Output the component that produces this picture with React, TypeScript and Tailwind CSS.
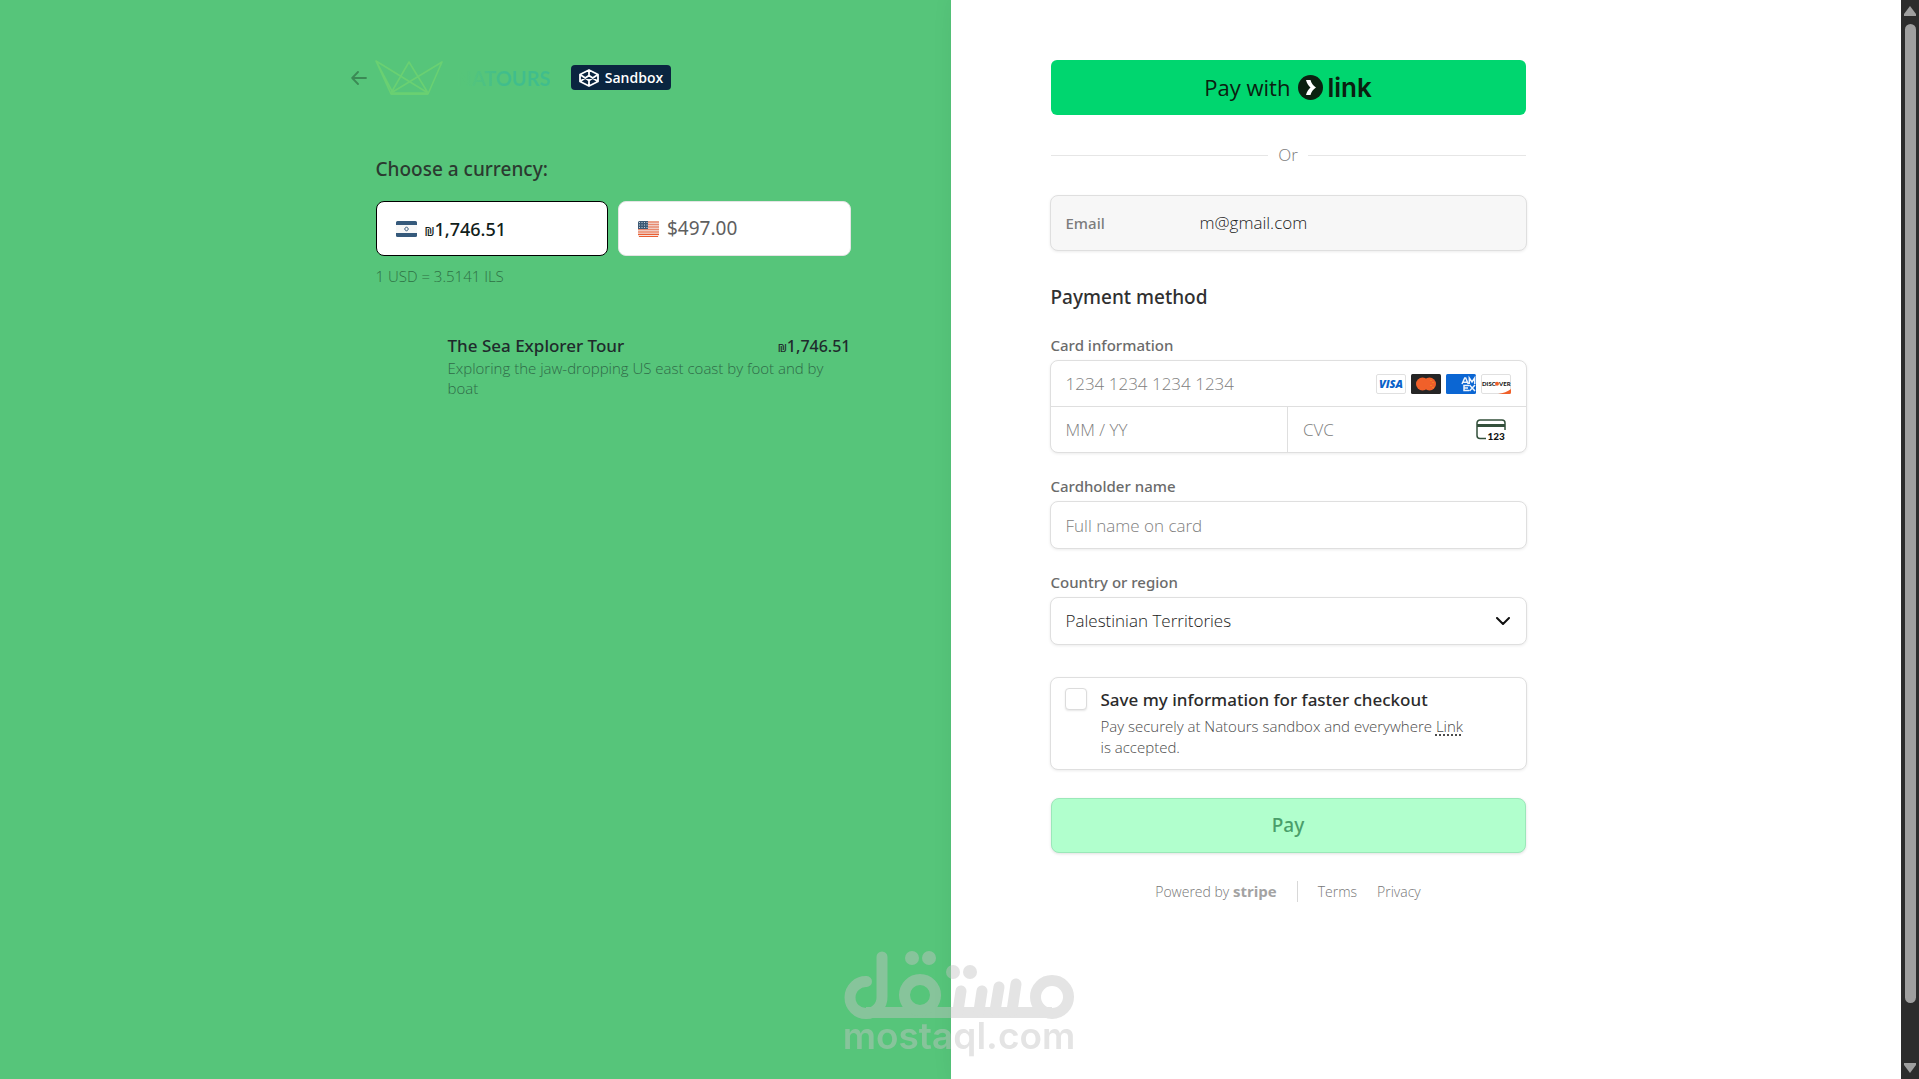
import React from "react";

const field =
  "rounded-lg border border-[#dfdfdf] bg-white shadow-[0_1px_3px_rgba(0,0,0,0.08)]";
const label = "block font-['Noto_Sans',sans-serif] text-[15px] leading-5 font-medium text-[#6b6b6b]";
const heading = "font-['Noto_Sans',sans-serif] text-[19px] leading-7 font-medium";
const fieldText = "text-[17px] font-light placeholder:text-[#808080] outline-none";

function Shekel({ className }: { className: string }) {
  return <span className={className}>₪</span>;
}

function IsraelFlag() {
  return (
    <svg viewBox="0 0 21 16" className="h-4 w-[21px]" aria-hidden="true">
      <rect width="21" height="16" rx="1.5" fill="#f7f7f7" />
      <path d="M1.5 0h18A1.5 1.5 0 0 1 21 1.5V4H0V1.5A1.5 1.5 0 0 1 1.5 0z" fill="#35597b" />
      <path d="M0 12h21v2.500A1.500 1.500 0 0 1 19.500 16h-18A1.500 1.500 0 0 1 0 14.500z" fill="#35597b" />
      <path d="M10.500 5.800 12.500 8l-2 2.200L8.500 8z" fill="none" stroke="#35597b" />
    </svg>
  );
}

function UsFlag() {
  return (
    <svg viewBox="0 0 21 16" className="h-4 w-[21px]" aria-hidden="true">
      <rect width="21" height="16" rx="1.500" fill="#f3e3df" />
      <path d="M10 1h11M10 3.500h11M10 6h11M0 8.500h21" stroke="#e8896f" strokeWidth="1.400" />
      <path d="M0 11h21M0 13.400h21M1 15.500h19" stroke="#ea5f33" strokeWidth="1.200" />
      <path d="M1.500 0H10v8H0V1.500A1.500 1.500 0 0 1 1.500 0z" fill="#3c5a76" />
      <path d="M1 1.500h9M1 4h9M1 6.500h9" stroke="#c9d2da" strokeDasharray="1 1.500" />
    </svg>
  );
}

function Crown() {
  return (
    <svg viewBox="0 0 68 36" className="h-9 w-17" fill="none" stroke="#6ad072" strokeWidth="1.500" strokeLinejoin="round" aria-hidden="true">
      <path d="M1 1 16 34H53L67 2 16 33 34 2 53 33 1 1 18 33" strokeWidth="1.600" />
      <path d="M16 33.500H53" strokeWidth="2.400" />
    </svg>
  );
}

function CardBrands() {
  return (
    <div className="flex gap-[5px]" aria-label="Accepted cards">
      <svg viewBox="0 0 30 20" className="h-5 w-[30px]">
        <rect x=".5" y=".5" width="29" height="19" rx="1.500" fill="#fff" stroke="#e0e0e0" />
        <text x="15" y="14" textAnchor="middle" fontFamily="Open Sans, sans-serif" fontWeight="800" fontStyle="italic" fontSize="11" fill="#0a62c9">VISA</text>
      </svg>
      <svg viewBox="0 0 30 20" className="h-5 w-[30px]">
        <rect width="30" height="20" rx="1.500" fill="#252525" />
        <circle cx="11.500" cy="10" r="6.500" fill="#f0602a" />
        <circle cx="18.500" cy="10" r="6.500" fill="#f0602a" />
        <path d="M20 6v1M22 8v1M20 11v1M22 13v1" stroke="#f79e1b" />
      </svg>
      <svg viewBox="0 0 30 20" className="h-5 w-[30px]">
        <rect width="30" height="20" rx="1.500" fill="#0b66d3" />
        <g fill="none" stroke="#eef4fc" strokeWidth="1.500">
          <path d="m16 10 2.700-6h1l2.500 6M17 8.300h4M23.300 10V4l2.700 4 2.700-4v6" />
          <path d="M23 11.500h-5v5h5M18 14h4M23.500 11l5.500 6M29 11l-5.500 6" />
        </g>
      </svg>
      <svg viewBox="0 0 30 20" className="h-5 w-[30px]">
        <rect x=".5" y=".5" width="29" height="19" rx="1.500" fill="#fff" stroke="#e0e0e0" />
        <text x="1" y="12" fontFamily="Lato, sans-serif" fontWeight="900" fontSize="6" fill="#222">DISC</text>
        <circle cx="16" cy="9.700" r="2" fill="#f0602a" />
        <text x="18" y="12" fontFamily="Lato, sans-serif" fontWeight="900" fontSize="6" fill="#222">VER</text>
        <path d="M17 20q8-1 13-5v3.500a1.500 1.500 0 0 1-1.500 1.500z" fill="#f0602a" />
      </svg>
    </div>
  );
}

function CvcIcon() {
  return (
    <svg viewBox="0 0 30 22" className="h-[22px] w-[30px]" aria-hidden="true">
      <path d="M10 19.500H4A3 3 0 0 1 1 16.500V4A3 3 0 0 1 4 1H26A3 3 0 0 1 29 4v7" fill="none" stroke="#33503b" strokeWidth="1.500" />
      <path d="M1 6.500h28" stroke="#33503b" strokeWidth="3" />
      <text x="11.500" y="20.500" fontFamily="Lato, sans-serif" fontWeight="900" fontSize="10" fill="#111">123</text>
    </svg>
  );
}

function Watermark() {
  return (
    <svg
      viewBox="0 0 232 110"
      className="pointer-events-none fixed bottom-[18px] left-1/2 h-[110px] w-[232px] -translate-x-1/2 overflow-visible opacity-45"
      aria-hidden="true"
    >
      <g fill="none" stroke="#c3c3c3" strokeWidth="11" strokeLinecap="round">
        <path d="M22.500 30.500A16 16 0 1 0 38 46V6" />
        <path d="M22 61.500H208" strokeLinecap="butt" />
        <circle cx="76" cy="44" r="15.500" />
        <circle cx="208" cy="46" r="16.500" />
        <path d="M117 40 114 60M138 40 135 60M155 36 151 60M172 33 168 60" />
      </g>
      <g fill="#c3c3c3">
        <circle cx="68" cy="7" r="7" />
        <circle cx="85" cy="7" r="7" />
        <circle cx="109" cy="21" r="7" />
        <circle cx="126" cy="21" r="7" />
        <text x="115" y="98" textAnchor="middle" fontFamily="Inter, sans-serif" fontWeight="600" fontSize="37">mostaql.com</text>
      </g>
    </svg>
  );
}

function Scrollbar() {
  return (
    <div className="flex w-[18px] shrink-0 flex-col items-center bg-[#2c2c2c] py-1.5" aria-hidden="true">
      <svg viewBox="0 0 14 10" className="h-2.5 w-3.5"><path d="M7 0 13 8V10H1V8z" fill="#9f9f9f" /></svg>
      <div className="mt-2 mb-15 w-[11px] flex-1 rounded-full bg-[#9f9f9f]" />
      <svg viewBox="0 0 14 10" className="h-2.5 w-3.5"><path d="M7 10 13 2V0H1V2z" fill="#9f9f9f" /></svg>
    </div>
  );
}

function Summary() {
  return (
    <section className="flex justify-end bg-[#56c57a] pr-[100px] pl-8 pt-[60px]">
      <div className="w-full max-w-[475px]">
        <header className="-ml-[25px] flex h-[35px] items-center">
          <a href="#back" aria-label="Back" className="mr-2 text-[#3b8a55]">
            <svg viewBox="0 0 16 14" className="h-3.5 w-4" fill="none" stroke="currentColor" strokeWidth="1.800" strokeLinecap="round" strokeLinejoin="round">
              <path d="M15 7H1.500M7 1 1.200 7 7 13" />
            </svg>
          </a>
          <Crown />
          <span className="ml-3.5 bg-linear-to-r from-[#56c57a] from-10% to-[#40bd8c] to-50% bg-clip-text font-[Lato] text-xl font-bold text-transparent">
            NATOURS
          </span>
          <span className="ml-5 flex h-[25px] items-center gap-1.5 rounded bg-[#0a2540] px-2 text-sm font-semibold text-white">
            <svg viewBox="0 0 20 18" className="h-[18px] w-5" fill="none" stroke="#fff" strokeWidth="1.800" strokeLinejoin="round" aria-hidden="true">
              <path d="M10 1 19 5.500v7L10 17 1 12.500v-7zM10 1v5M10 12v5M1 5.500l9 6 9-6M1 12.500l9-6 9 6" />
            </svg>
            Sandbox
          </span>
        </header>

        <h2 className={heading + " mt-15 text-[#2b3a30]"}>Choose a currency:</h2>
        <div className="mt-4.5 grid grid-cols-2 gap-2.5">
          <button type="button" className="flex h-[55px] items-center gap-2 rounded-lg border border-black bg-white pl-[19px] font-['Noto_Sans'] text-lg font-medium text-[#10201a]">
            <IsraelFlag />
            <span><Shekel className="text-xs" />1,746.51</span>
          </button>
          <button type="button" className="flex h-[55px] items-center gap-2 rounded-lg border border-[#e4e4e4] bg-white pl-[19px] font-['Noto_Sans'] text-[19px] text-[#5f5f5f]">
            <UsFlag />
            $497.00
          </button>
        </div>
        <p className="mt-2.5 text-[15px] leading-5 font-light text-[#2e7044]">1 USD = 3.5141 ILS</p>

        <div className="mt-[50px] pl-[72px]">
          <div className="flex justify-between font-['Noto_Sans'] font-medium text-[#1f2a2c]">
            <h3 className="text-[17px] leading-5">The Sea Explorer Tour</h3>
            <span className="text-base leading-5"><Shekel className="text-[11px]" />1,746.51</span>
          </div>
          <p className="max-w-[390px] text-[15px] leading-5 font-light text-[#2f6a48]">
            Exploring the jaw-dropping US east coast by foot and by boat
          </p>
        </div>
      </div>
    </section>
  );
}

function Payment() {
  return (
    <section className="bg-white pr-8 pl-[100px] pt-[60px] shadow-[15px_0_30px_rgba(0,0,0,0.18)]">
      <form className="w-full max-w-[475px]">
        <button type="button" className="flex h-[55px] w-full items-center justify-center gap-2 rounded-md bg-[#00d66f] text-[22px] text-[#0b2010]">
          Pay with
          <span className="flex items-center gap-1">
            <svg viewBox="0 0 25 25" className="size-[25px]" aria-hidden="true">
              <circle cx="12.500" cy="12.500" r="12.500" fill="#0b2010" />
              <path d="M8 5h4.500c.8 3 2.700 5.700 5.500 7.500-2.800 1.800-4.700 4.500-5.500 7.500H8c.8-3.200 2.400-5.800 4.500-7.500C10.400 10.800 8.800 8.200 8 5z" fill="#fff" />
            </svg>
            <span className="font-[Inter] text-[26px] font-semibold">link</span>
          </span>
        </button>

        <div className="my-7 flex h-6 items-center gap-2.5 text-[17px] font-light text-[#7c7c7c]">
          <span className="h-px flex-1 bg-[#e6e6e6]" />
          Or
          <span className="h-px flex-1 bg-[#e6e6e6]" />
        </div>

        <div className="-mx-px flex h-14 items-center rounded-lg border border-[#dfdfdf] bg-[#f7f7f7] px-[15px] shadow-[0_1px_3px_rgba(0,0,0,0.08)]">
          <span className="w-[134px] font-['Noto_Sans'] text-[15px] font-medium text-[#7c7c7c]">Email</span>
          <span className="text-[17px] font-light text-[#222]">m@gmail.com</span>
        </div>

        <h2 className={heading + " mt-8 text-[#303030]"}>Payment method</h2>

        <fieldset className="mt-6">
          <legend className={label + " mb-[5px]"}>Card information</legend>
          <div className={field + " -mx-px"}>
            <div className="flex h-[46px] items-center border-b border-[#dfdfdf] px-[15px]">
              <input aria-label="Card number" placeholder="1234 1234 1234 1234" className={fieldText + " min-w-0 flex-1"} />
              <CardBrands />
            </div>
            <div className="grid h-[45px] grid-cols-2">
              <input aria-label="Expiration" placeholder="MM / YY" className={fieldText + " min-w-0 border-r border-[#dfdfdf] px-[15px]"} />
              <div className="flex items-center pr-5 pl-[15px]">
                <input aria-label="CVC" placeholder="CVC" className={fieldText + " min-w-0 flex-1"} />
                <CvcIcon />
              </div>
            </div>
          </div>
        </fieldset>

        <label htmlFor="holder" className={label + " mt-[23px] mb-[5px]"}>Cardholder name</label>
        <div className={field + " -mx-px"}>
          <input id="holder" placeholder="Full name on card" className={fieldText + " block h-[46px] w-full px-[15px]"} />
        </div>

        <label htmlFor="country" className={label + " mt-[23px] mb-[5px]"}>Country or region</label>
        <div className={field + " relative -mx-px"}>
          <select id="country" className="block h-[46px] w-full appearance-none rounded-lg bg-transparent px-[15px] text-[17px] font-light text-[#222] outline-none">
            <option>Palestinian Territories</option>
          </select>
          <svg viewBox="0 0 14 8" className="pointer-events-none absolute top-1/2 right-4 h-2 w-3.5 -translate-y-1/2" fill="none" stroke="#111" strokeWidth="2" strokeLinecap="round" strokeLinejoin="round" aria-hidden="true">
            <path d="m1 1 6 6 6-6" />
          </svg>
        </div>

        <div className={field + " -mx-px mt-8 flex min-h-[93px] gap-3.5 px-3.5 pt-2.5"}>
          <input id="save" type="checkbox" className="size-[22px] shrink-0 appearance-none rounded border border-[#dcdcdc] bg-white shadow-[0_1px_2px_rgba(0,0,0,0.1)]" />
          <div>
            <label htmlFor="save" className="block font-['Noto_Sans'] text-[17px] leading-6 font-medium text-[#2b2b2b]">
              Save my information for faster checkout
            </label>
            <p className="mt-1 max-w-[370px] text-[15px] leading-[21px] font-light text-[#4b4b4b]">
              Pay securely at Natours sandbox and everywhere{" "}
              <a href="#link" className="underline decoration-dotted decoration-2 underline-offset-2">Link</a> is accepted.
            </p>
          </div>
        </div>

        <button type="submit" className="mt-7 h-[55px] w-full rounded-lg border border-[#9be8b9] bg-[#b1ffcd] font-['Noto_Sans'] text-[19px] font-medium text-[#4a9e6a] shadow-[0_1px_3px_rgba(0,0,0,0.12)]">
          Pay
        </button>

        <footer className="mt-7 flex items-center justify-center text-sm font-light text-[#777]">
          <span>
            Powered by <b className="text-[15px] leading-5 font-bold text-[#a3a3a3]">stripe</b>
          </span>
          <span className="mx-5 h-[21px] w-px bg-[#d8d8d8]" />
          <a href="#terms" className="mr-5">Terms</a>
          <a href="#privacy">Privacy</a>
        </footer>
      </form>
    </section>
  );
}

export default function App() {
  return (
    <div className="flex min-h-screen font-['Open_Sans',sans-serif]">
      <main className="grid flex-1 grid-cols-2 overflow-hidden">
        <Summary />
        <Payment />
      </main>
      <Scrollbar />
      <Watermark />
    </div>
  );
}
